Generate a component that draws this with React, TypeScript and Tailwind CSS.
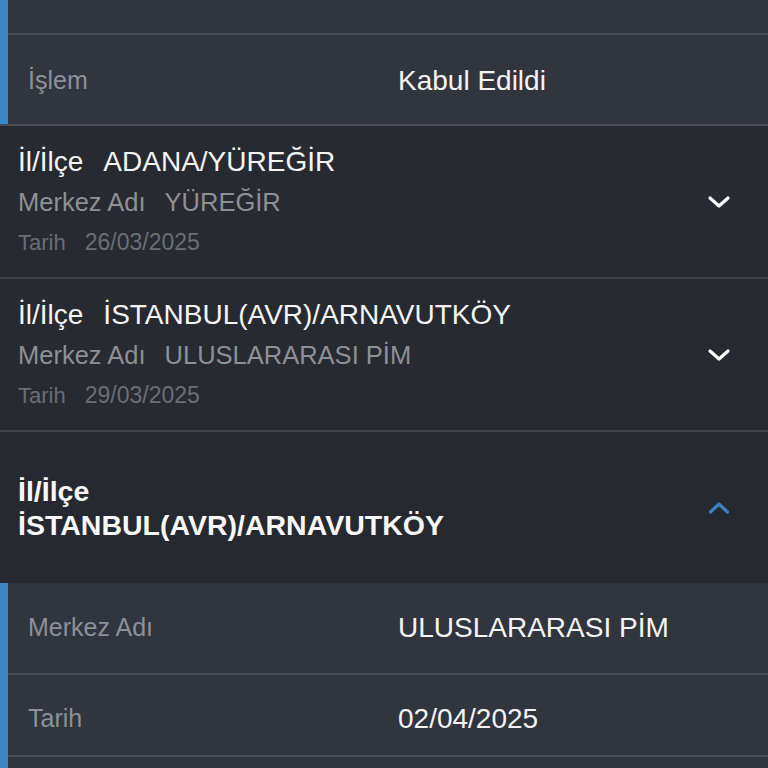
import React from "react";

const Down = () => (
  <svg width="24" height="14" viewBox="0 0 24 14" fill="none">
    <path d="M3 3 L12 11 L21 3" stroke="#ffffff" strokeWidth="3.2" strokeLinecap="round" strokeLinejoin="round" />
  </svg>
);

const Up = () => (
  <svg width="24" height="16" viewBox="0 0 24 16" fill="none">
    <path d="M3.5 12 L12 4 L20.5 12" stroke="#3f7fbf" strokeWidth="3.2" strokeLinecap="round" strokeLinejoin="round" />
  </svg>
);

function DetailRow({ label, value, h, extra, last }: { label: string; value: string; h: string; extra?: string; last?: boolean }) {
  return (
    <div className={`flex items-center ${h} ${extra ?? ""} ${last ? "" : "border-b-2 border-[#464a53]"}`}>
      <div className="w-[390px] pl-[20px] text-[25px] text-[#8c9098]">{label}</div>
      <div className="text-[28px] text-[#f4f4f4]">{value}</div>
    </div>
  );
}

function Item({ city, center, date }: { city: string; center: string; date: string }) {
  return (
    <div className="flex items-center h-[153px] border-b-2 border-[#3f434b] pl-[18px] pr-[37px]">
      <div className="flex-1 flex flex-col">
        <div className="h-[38px] flex items-center text-[28px] text-[#f4f4f4] whitespace-nowrap">
          <span>İl/İlçe</span>
          <span className="ml-[20px]">{city}</span>
        </div>
        <div className="h-[44px] flex items-center text-[25.5px] text-[#8e9096] whitespace-nowrap">
          <span>Merkez Adı</span>
          <span className="ml-[19px]">{center}</span>
        </div>
        <div className="h-[36px] flex items-center text-[22px] text-[#6b6e75] whitespace-nowrap">
          <span>Tarih</span>
          <span className="ml-[19px] text-[23px]">{date}</span>
        </div>
      </div>
      <Down />
    </div>
  );
}

export default function App() {
  return (
    <div
      className="w-[768px] h-[768px] overflow-hidden bg-[#272a31]"
      style={{ fontFamily: '"Liberation Sans", Arial, sans-serif' }}
    >
      <div className="flex bg-[#31353e] border-b-2 border-[#474b54]">
        <div className="w-[8px] bg-[#3b87c8]" />
        <div className="flex-1 flex flex-col">
          <div className="h-[35px] border-b-2 border-[#464a53]" />
          <DetailRow label="İşlem" value="Kabul Edildi" h="h-[89px]" extra="pt-[2px]" last />
        </div>
      </div>
      <Item city="ADANA/YÜREĞİR" center="YÜREĞİR" date="26/03/2025" />
      <Item city="İSTANBUL(AVR)/ARNAVUTKÖY" center="ULUSLARARASI PİM" date="29/03/2025" />
      <div className="flex items-center h-[151px] pl-[18px] pr-[37px] bg-[#262930]">
        <div className="flex-1 flex flex-col text-[28.5px] font-bold leading-[34px] text-[#f7f7f7]">
          <div>İl/İlçe</div>
          <div>İSTANBUL(AVR)/ARNAVUTKÖY</div>
        </div>
        <Up />
      </div>
      <div className="flex bg-[#31353e]">
        <div className="w-[8px] bg-[#3b87c8]" />
        <div className="flex-1 flex flex-col">
          <DetailRow label="Merkez Adı" value="ULUSLARARASI PİM" h="h-[92px]" />
          <DetailRow label="Tarih" value="02/04/2025" h="h-[82px]" extra="pt-[7px]" />
          <div className="h-[40px]" />
        </div>
      </div>
    </div>
  );
}
